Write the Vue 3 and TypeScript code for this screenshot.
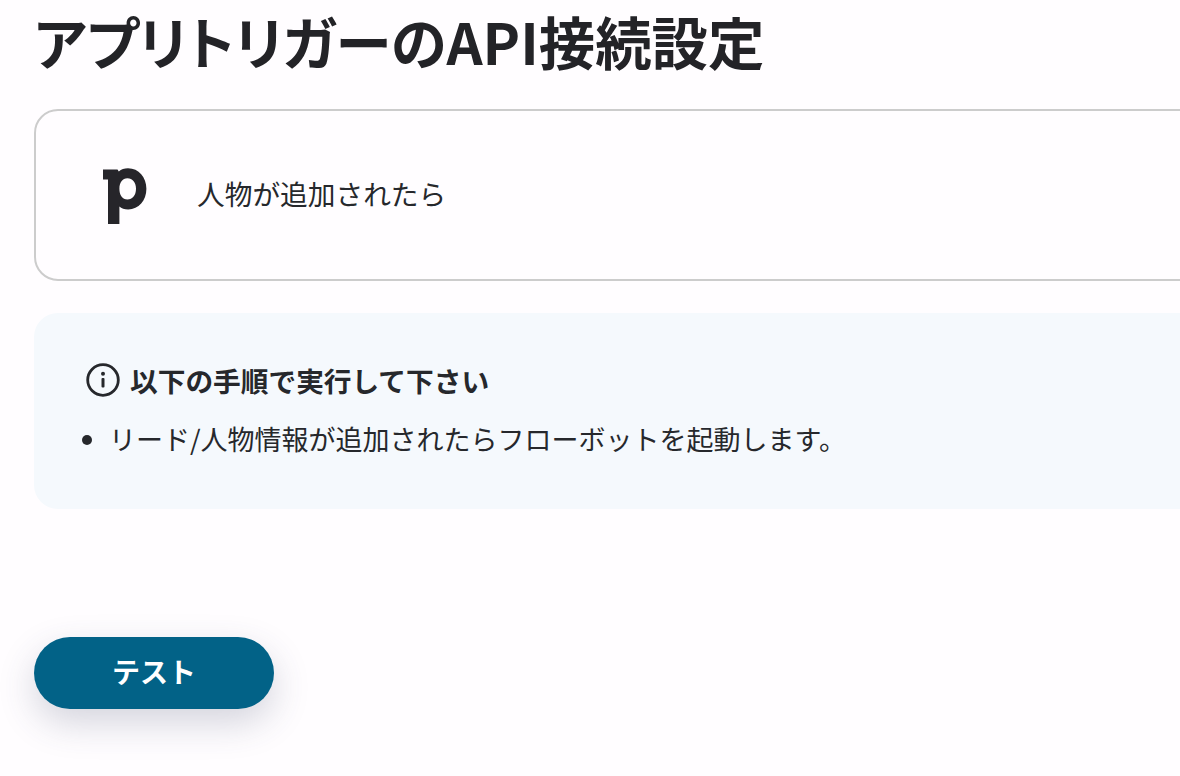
<template>
  <div class="page">
    <h1 class="title">アプリトリガーのAPI接続設定</h1>

    <div class="app-card">
      <svg class="logo" width="46" height="58" viewBox="0 0 46 58" aria-hidden="true">
        <path
          fill="#26252a"
          fill-rule="evenodd"
          d="M1 1.5H15.5L16.8 3.4C19.2 1.4 22.4 .2 26 .2C36.8 .2 44.4 9 44.4 20.8C44.4 32.8 36.6 41.4 26.2 41.4C22.4 41.4 19.4 40.2 17.4 38.4V56H6V11.4H1ZM25.4 10.2C20.4 10.2 17.4 14.4 17.4 20.8C17.4 27.2 20.4 31.6 25.4 31.6C30.6 31.6 34 27.2 34 20.8C34 14.4 30.6 10.2 25.4 10.2Z"
        />
      </svg>
      <span class="app-label">人物が追加されたら</span>
    </div>

    <div class="notice">
      <div class="notice-head">
        <svg class="info" width="34" height="34" viewBox="0 0 34 34" aria-hidden="true">
          <circle cx="17" cy="17" r="15.3" fill="none" stroke="#26282c" stroke-width="2.8" />
          <rect x="15.5" y="15" width="3" height="9.5" rx="1" fill="#26282c" />
          <circle cx="17" cy="10.8" r="2" fill="#26282c" />
        </svg>
        <span>{{ heading }}</span>
      </div>
      <ul class="steps">
        <li v-for="step in steps" :key="step">{{ step }}</li>
      </ul>
    </div>

    <button class="test-btn" type="button">テスト</button>
  </div>
</template>

<script setup lang="ts">
const heading = '以下の手順で実行して下さい'
const steps: string[] = ['リード/人物情報が追加されたらフローボットを起動します。']
</script>

<style>
html,
body {
  margin: 0;
  background: #fffdff;
  overflow: hidden;
}
</style>

<style scoped>
.page {
  width: 1180px;
  height: 776px;
  box-sizing: border-box;
  padding-left: 34px;
  overflow: hidden;
  font-family: 'Noto Sans CJK JP', 'Noto Sans', sans-serif;
  color: #26282c;
}

.title {
  margin: 0;
  height: 109px;
  font-size: 56.4px;
  font-weight: 700;
  line-height: 82px;
  color: #232327;
  font-feature-settings: 'palt';
  white-space: nowrap;
}

.app-card {
  display: flex;
  align-items: center;
  box-sizing: border-box;
  width: 1200px;
  height: 172px;
  padding-left: 66px;
  gap: 49px;
  border: 2px solid #cccccc;
  border-radius: 24px;
}

.logo {
  flex: none;
  margin-top: 4px;
}

.app-label {
  font-size: 27.7px;
  line-height: 38px;
  margin-top: -4px;
}

.notice {
  box-sizing: border-box;
  width: 1200px;
  height: 196px;
  margin-top: 32px;
  padding: 49px 0 0 52px;
  background: #f5f9fd;
  border-radius: 24px;
}

.notice-head {
  display: flex;
  align-items: center;
  gap: 10px;
  font-size: 27.7px;
  font-weight: 700;
  line-height: 36px;
}

.steps {
  margin: 22px 0 0;
  padding: 0 0 0 23px;
  font-size: 27px;
  line-height: 38px;
}

.test-btn {
  display: block;
  width: 240px;
  height: 72px;
  margin-top: 128px;
  padding: 0 0 4px;
  border: none;
  border-radius: 36px;
  background: #026287;
  color: #ffffff;
  font-family: inherit;
  font-size: 28px;
  font-weight: 700;
  box-shadow: 0 14px 36px rgba(60, 70, 100, 0.22);
}
</style>
